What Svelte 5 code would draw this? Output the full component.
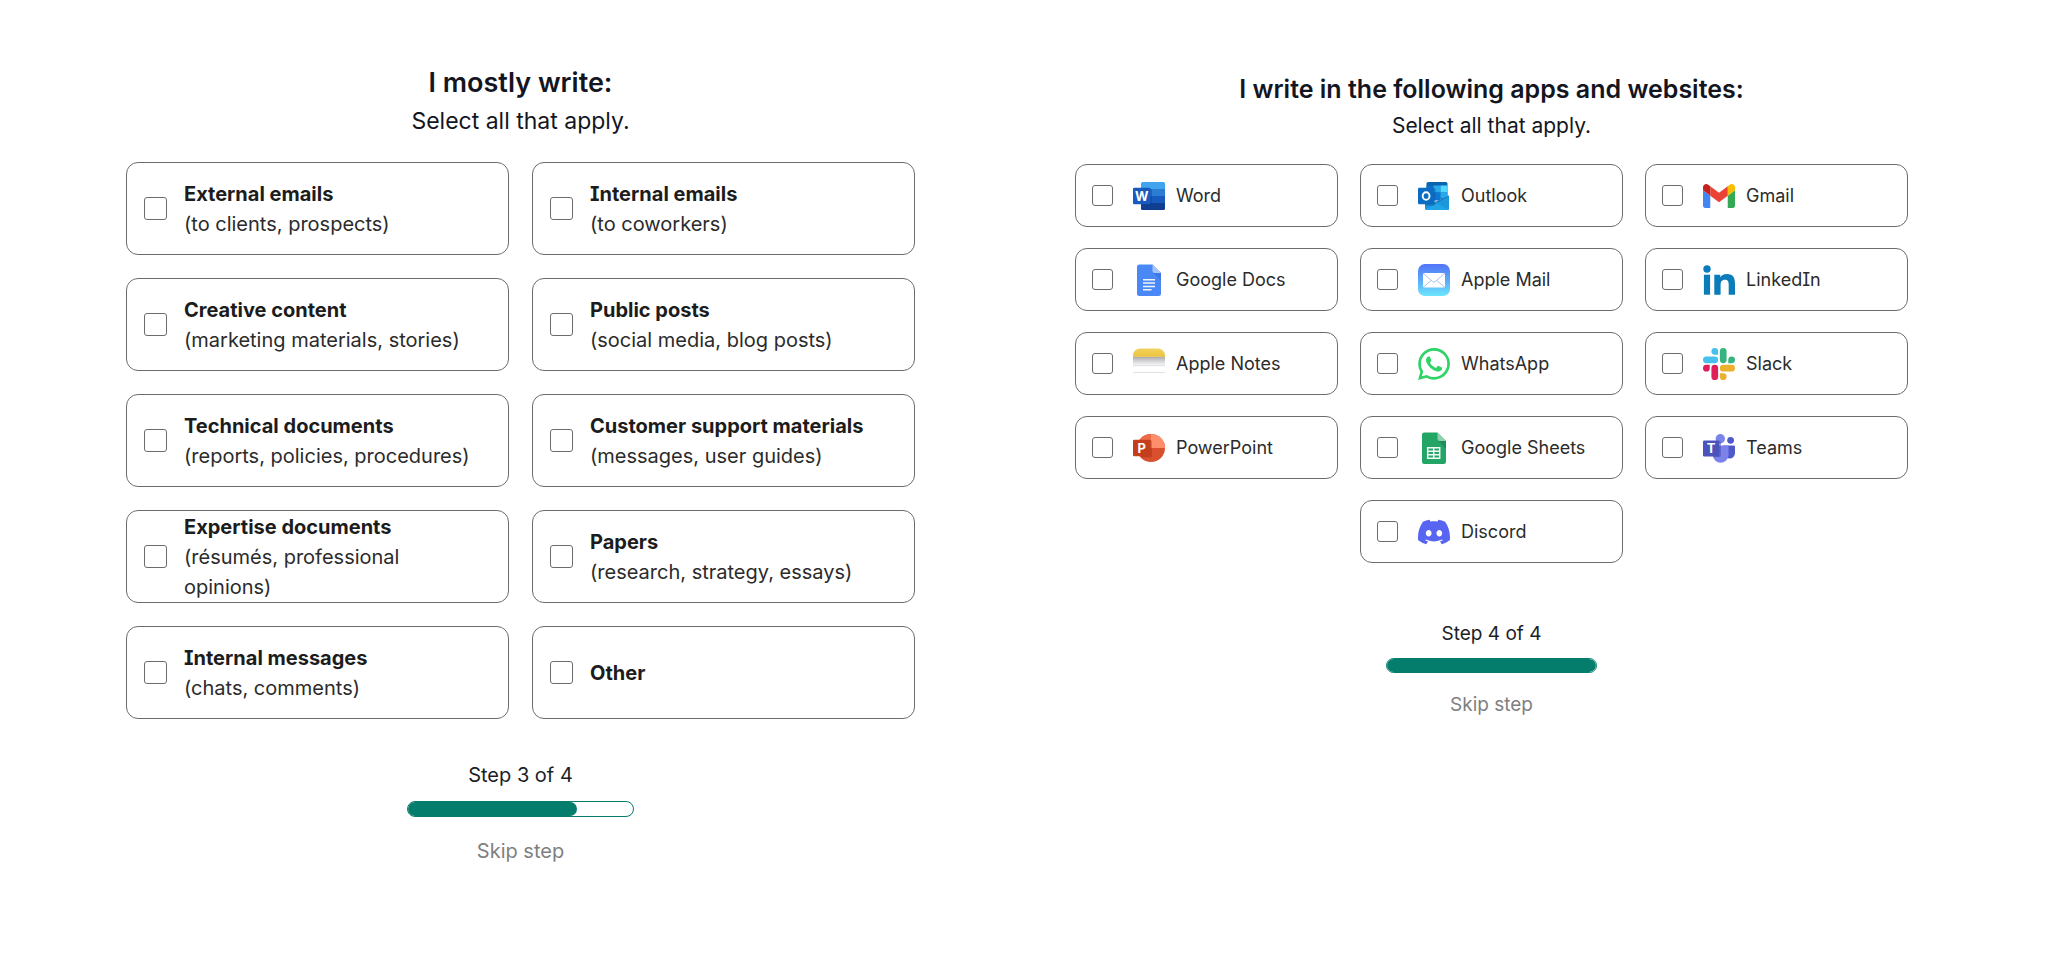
<script lang="ts">
	let topics = [
		{ title: "External emails", note: "(to clients, prospects)", checked: false },
		{ title: "Internal emails", note: "(to coworkers)", checked: false },
		{ title: "Creative content", note: "(marketing materials, stories)", checked: false },
		{ title: "Public posts", note: "(social media, blog posts)", checked: false },
		{ title: "Technical documents", note: "(reports, policies, procedures)", checked: false },
		{ title: "Customer support materials", note: "(messages, user guides)", checked: false },
		{ title: "Expertise documents", note: "(résumés, professional opinions)", checked: false },
		{ title: "Papers", note: "(research, strategy, essays)", checked: false },
		{ title: "Internal messages", note: "(chats, comments)", checked: false },
		{ title: "Other", note: "", checked: false },
	];

	let apps = [
		"Word",
		"Outlook",
		"Gmail",
		"Google Docs",
		"Apple Mail",
		"LinkedIn",
		"Apple Notes",
		"WhatsApp",
		"Slack",
		"PowerPoint",
		"Google Sheets",
		"Teams",
		"Discord",
	].map((name) => ({ name, checked: false }));

	const total = 4;
</script>

<main>
	<section class="topics">
		<header>
			<h1>I mostly write:</h1>
			<p>Select all that apply.</p>
		</header>

		<div class="options">
			{#each topics as topic}
				<label class="card">
					<input type="checkbox" bind:checked={topic.checked} />
					<span class="text">
						<strong>{topic.title}</strong>
						{#if topic.note}
							<span>{topic.note}</span>
						{/if}
					</span>
				</label>
			{/each}
		</div>

		<footer>
			<p>Step 3 of {total}</p>
			<div class="bar"><div class="fill" style="width: {(3 / total) * 100}%"></div></div>
			<button type="button">Skip step</button>
		</footer>
	</section>

	<section class="apps">
		<header>
			<h1>I write in the following apps and websites:</h1>
			<p>Select all that apply.</p>
		</header>

		<div class="options">
			{#each apps as app}
				<label class="card">
					<input type="checkbox" bind:checked={app.checked} />
					<svg viewBox="0 0 32 32" aria-hidden="true">
						{#if app.name === "Word"}
							<clipPath id="word-page"><rect x="8" y="2" width="24" height="28" rx="1.500" /></clipPath>
							<g clip-path="url(#word-page)">
								<rect x="8" y="2" width="24" height="7" fill="#41a5ee" />
								<rect x="8" y="9" width="24" height="7" fill="#2b7cd3" />
								<rect x="8" y="16" width="24" height="7" fill="#185abd" />
								<rect x="8" y="23" width="24" height="7" fill="#103f91" />
								<rect x="8" y="9" width="11" height="16.500" fill="#0b3a85" opacity="0.350" />
							</g>
							<rect y="7.700" width="17.500" height="16.600" rx="1.300" fill="#185abd" />
							<text class="mark" x="8.700" y="20.600">W</text>
						{:else if app.name === "Outlook"}
							<path d="M10 2h18a1.500 1.500 0 0 1 1.500 1.500V19H8.500V3.500A1.500 1.500 0 0 1 10 2z" fill="#0a64ad" />
							<path d="M8.500 5.500h7v7h-7z" fill="#0f6fc0" />
							<path d="M15.500 5.500h7v7h-7z" fill="#28a8ea" />
							<path d="M22.500 5.500h7v7h-7z" fill="#50d9ff" />
							<path d="M15.500 12.500h7v8h-7z" fill="#0f78d4" />
							<path d="M22.500 12.500h7v6h-7z" fill="#28a8ea" />
							<path d="M31 15.500v13a1.500 1.500 0 0 1-1.500 1.500H8.500A1.500 1.500 0 0 1 7 28.500v-12l12 6.500z" fill="#1995df" />
							<path d="M31 15.500v13c0 .5-.2.900-.5 1.100L17 22z" fill="#1078c4" />
							<path d="M7.500 29.600 31 16v12.500a1.500 1.500 0 0 1-1.500 1.500h-21c-.4 0-.8-.2-1-.4z" fill="#28b0ee" opacity="0.550" />
							<path d="M7 8h9a1.500 1.500 0 0 1 1.500 1.500V24a1.500 1.500 0 0 1-1.500 1.500H7z" fill="#0a4a83" opacity="0.400" />
							<rect y="7.700" width="16.300" height="16.600" rx="1.300" fill="#0b6cc4" />
							<ellipse cx="8.100" cy="16" rx="3.400" ry="3.800" fill="none" stroke="#fff" stroke-width="1.900" />
						{:else if app.name === "Gmail"}
							<svg viewBox="52 42 88 66">
								<path fill="#4285f4" d="M58 108h14V74L52 59v43c0 3.320 2.690 6 6 6" />
								<path fill="#34a853" d="M120 108h14c3.320 0 6-2.690 6-6V59l-20 15" />
								<path fill="#fbbc04" d="M120 48v26l20-15v-8c0-7.420-8.470-11.650-14.400-7.200" />
								<path fill="#ea4335" d="M72 74V48l24 18 24-18v26L96 92" />
								<path fill="#c5221f" d="M52 51v8l20 15V48l-5.600-4.200c-5.940-4.450-14.400-.220-14.400 7.200" />
							</svg>
						{:else if app.name === "Google Docs"}
							<path d="M6.200.5H19.500L28 9v20.800a2.200 2.200 0 0 1-2.200 2.200H6.200A2.200 2.200 0 0 1 4 29.800V2.700A2.200 2.200 0 0 1 6.200.5z" fill="#4a89f5" />
							<path d="M20 8.500 28 17V9z" fill="#3467d6" opacity="0.500" />
							<path d="M19.500.5 28 9h-6.300a2.200 2.200 0 0 1-2.200-2.200z" fill="#a5c5fb" />
							<path d="M10 15.800h12M10 19.100h12M10 22.400h12M10 25.700h8.500" stroke="#f1f5fe" stroke-width="1.500" />
						{:else if app.name === "Apple Mail"}
							<linearGradient id="mail-sky" x2="0" y2="1">
								<stop offset="0" stop-color="#5374f8" />
								<stop offset="0.500" stop-color="#5aa9f8" />
								<stop offset="1" stop-color="#6ce6fc" />
							</linearGradient>
							<rect width="32" height="32" rx="7" fill="url(#mail-sky)" />
							<rect x="5" y="9" width="22" height="14.500" rx="1.600" fill="#fff" />
							<path d="M5.500 9.500l9.300 8.200q1.200 1 2.400 0l9.300-8.200M5.500 23l7.800-6.600M26.500 23l-7.800-6.600" fill="none" stroke="#8fb4e8" stroke-width="0.800" />
						{:else if app.name === "LinkedIn"}
							<g fill="#0b7cba">
								<circle cx="4" cy="5" r="3.700" />
								<rect x="0.900" y="10.700" width="6.200" height="20" />
								<path d="M11.300 10.700h6v2.700c1-1.800 3.300-3.300 6.500-3.300 6.700 0 8.200 4 8.200 9.800v10.800h-6.300v-9.600c0-2.600-.2-5.300-3.700-5.300s-4.400 2.500-4.400 5.200v9.700h-6.300z" />
							</g>
						{:else if app.name === "Apple Notes"}
							<linearGradient id="notes-top" x2="0" y2="1">
								<stop offset="0" stop-color="#f2d35e" />
								<stop offset="1" stop-color="#edc23c" />
							</linearGradient>
							<linearGradient id="notes-shade" x2="0" y2="1">
								<stop offset="0" stop-color="#a9a9ab" />
								<stop offset="0.600" stop-color="#dcdcde" />
								<stop offset="1" stop-color="#f7f7f8" />
							</linearGradient>
							<rect y="8.500" width="32" height="9" fill="url(#notes-shade)" />
							<path d="M7 .5h18a7 7 0 0 1 7 7v1.300H0V7.500a7 7 0 0 1 7-7z" fill="url(#notes-top)" />
							<path d="M0 17.700h32M0 24.500h32" stroke="#d4d4d6" stroke-width="0.700" />
						{:else if app.name === "WhatsApp"}
							<svg viewBox="0 0 24 24">
								<path
									fill="#2fd366"
									d="M17.472 14.382c-.297-.149-1.758-.867-2.030-.967-.273-.099-.471-.148-.670.150-.197.297-.767.966-.940 1.164-.173.199-.347.223-.644.075-.297-.150-1.255-.463-2.390-1.475-.883-.788-1.480-1.761-1.653-2.059-.173-.297-.018-.458.130-.606.134-.133.298-.347.446-.520.149-.174.198-.298.298-.497.099-.198.050-.371-.025-.520-.075-.149-.669-1.612-.916-2.207-.242-.579-.487-.500-.669-.510-.173-.008-.371-.010-.570-.010-.198 0-.520.074-.792.372-.272.297-1.040 1.016-1.040 2.479 0 1.462 1.065 2.875 1.213 3.074.149.198 2.096 3.200 5.077 4.487.709.306 1.262.489 1.694.625.712.227 1.360.195 1.871.118.571-.085 1.758-.719 2.006-1.413.248-.694.248-1.289.173-1.413-.074-.124-.272-.198-.570-.347m-5.421 7.403h-.004a9.870 9.870 0 0 1-5.031-1.378l-.361-.214-3.741.982.998-3.648-.235-.374a9.860 9.860 0 0 1-1.510-5.260c.001-5.450 4.436-9.884 9.888-9.884 2.640 0 5.122 1.030 6.988 2.898a9.825 9.825 0 0 1 2.893 6.994c-.003 5.450-4.437 9.884-9.885 9.884m8.413-18.297A11.815 11.815 0 0 0 12.050 0C5.495 0 .160 5.335.157 11.892c0 2.096.547 4.142 1.588 5.945L.057 24l6.305-1.654a11.882 11.882 0 0 0 5.683 1.448h.005c6.554 0 11.890-5.335 11.893-11.893a11.821 11.821 0 0 0-3.480-8.413Z"
								/>
							</svg>
						{:else if app.name === "Slack"}
							<svg viewBox="0 0 24 24">
								<path fill="#e01e5a" d="M5.042 15.165a2.528 2.528 0 0 1-2.520 2.523A2.528 2.528 0 0 1 0 15.165a2.527 2.527 0 0 1 2.522-2.520h2.520v2.520zM6.313 15.165a2.527 2.527 0 0 1 2.521-2.520 2.527 2.527 0 0 1 2.521 2.520v6.313A2.528 2.528 0 0 1 8.834 24a2.528 2.528 0 0 1-2.521-2.522v-6.313z" />
								<path fill="#46c1ee" d="M8.834 5.042a2.528 2.528 0 0 1-2.521-2.520A2.528 2.528 0 0 1 8.834 0a2.528 2.528 0 0 1 2.521 2.522v2.520H8.834zM8.834 6.313a2.528 2.528 0 0 1 2.521 2.521 2.528 2.528 0 0 1-2.521 2.521H2.522A2.528 2.528 0 0 1 0 8.834a2.528 2.528 0 0 1 2.522-2.521h6.312z" />
								<path fill="#36b37e" d="M18.956 8.834a2.528 2.528 0 0 1 2.522-2.521A2.528 2.528 0 0 1 24 8.834a2.528 2.528 0 0 1-2.522 2.521h-2.522V8.834zM17.688 8.834a2.528 2.528 0 0 1-2.523 2.521 2.527 2.527 0 0 1-2.520-2.521V2.522A2.527 2.527 0 0 1 15.165 0a2.528 2.528 0 0 1 2.523 2.522v6.312z" />
								<path fill="#ecb02f" d="M15.165 18.956a2.528 2.528 0 0 1 2.523 2.522A2.528 2.528 0 0 1 15.165 24a2.527 2.527 0 0 1-2.520-2.522v-2.522h2.520zM15.165 17.688a2.527 2.527 0 0 1-2.520-2.523 2.526 2.526 0 0 1 2.520-2.520h6.313A2.527 2.527 0 0 1 24 15.165a2.528 2.528 0 0 1-2.522 2.523h-6.313z" />
							</svg>
						{:else if app.name === "PowerPoint"}
							<circle cx="18" cy="16" r="14" fill="#d9502f" />
							<path d="M18 2a14 14 0 0 1 14 14H18z" fill="#ff8f6b" />
							<path d="M18 2v14H4A14 14 0 0 1 18 2z" fill="#ed6c47" />
							<path d="M8 8h9.500A1.500 1.500 0 0 1 19 9.500V24a1.500 1.500 0 0 1-1.500 1.500H8z" fill="#8f2a14" opacity="0.350" />
							<rect y="7.700" width="17.500" height="16.600" rx="1.300" fill="#c43e1c" />
							<text class="mark" x="8.700" y="20.600">P</text>
						{:else if app.name === "Google Sheets"}
							<path d="M6.200.5H19.500L28 9v20.800a2.200 2.200 0 0 1-2.200 2.200H6.200A2.200 2.200 0 0 1 4 29.800V2.700A2.200 2.200 0 0 1 6.200.5z" fill="#23a566" />
							<path d="M20 8.500 28 17V9z" fill="#1c8755" opacity="0.800" />
							<path d="M19.500.5 28 9h-6.300a2.200 2.200 0 0 1-2.200-2.200z" fill="#8ed1b1" />
							<path d="M9.700 15.700h12v10.600h-12zM9.700 19.200h12M9.700 22.700h12M15.700 15.700v10.600" fill="none" stroke="#f1faf5" stroke-width="1.500" />
						{:else if app.name === "Teams"}
							<circle cx="27.600" cy="8.300" r="3.400" fill="#5059c9" />
							<path d="M20 13.500h10.700A1.300 1.300 0 0 1 32 14.800V21a5.500 5.500 0 0 1-11 0z" fill="#5059c9" />
							<circle cx="17.300" cy="6.700" r="4.700" fill="#7b83eb" />
							<path d="M10 13.500h14.200a1.300 1.300 0 0 1 1.300 1.300v9a7.900 7.900 0 0 1-15.700 0z" fill="#7b83eb" />
							<path d="M10 9h6.500A1.500 1.500 0 0 1 18 10.500v13a1.500 1.500 0 0 1-1.500 1.500H10z" fill="#3d44a5" opacity="0.450" />
							<rect y="8.500" width="16.300" height="16" rx="1.300" fill="#4b53bc" />
							<text class="mark" x="8.100" y="21">T</text>
						{:else if app.name === "Discord"}
							<svg viewBox="0 0 24 24">
								<path
									fill="#5865f2"
									d="M20.317 4.370a19.791 19.791 0 0 0-4.885-1.515.074.074 0 0 0-.079.037c-.211.375-.445.865-.608 1.250-1.845-.276-3.680-.276-5.487 0-.164-.393-.406-.874-.618-1.250a.077.077 0 0 0-.079-.037 19.736 19.736 0 0 0-4.885 1.515.070.070 0 0 0-.032.028C.533 9.046-.319 13.580.099 18.058a.082.082 0 0 0 .031.056c2.053 1.508 4.041 2.423 5.993 3.029a.078.078 0 0 0 .084-.028c.462-.630.873-1.295 1.226-1.994a.076.076 0 0 0-.042-.106c-.653-.248-1.274-.550-1.872-.892a.077.077 0 0 1-.008-.128c.126-.094.252-.192.372-.291a.074.074 0 0 1 .078-.011c3.928 1.793 8.180 1.793 12.061 0a.074.074 0 0 1 .079.010c.120.099.246.198.373.292a.077.077 0 0 1-.007.128 12.299 12.299 0 0 1-1.873.891.077.077 0 0 0-.041.107c.360.698.772 1.363 1.225 1.993a.076.076 0 0 0 .084.029c1.961-.607 3.950-1.522 6.002-3.029a.077.077 0 0 0 .031-.055c.500-5.177-.838-9.674-3.549-13.660a.061.061 0 0 0-.031-.029zM8.020 15.331c-1.183 0-2.157-1.086-2.157-2.419 0-1.333.956-2.419 2.157-2.419 1.211 0 2.176 1.095 2.157 2.419 0 1.333-.956 2.419-2.157 2.419zm7.975 0c-1.183 0-2.157-1.086-2.157-2.419 0-1.333.955-2.419 2.157-2.419 1.211 0 2.176 1.095 2.157 2.419 0 1.333-.946 2.419-2.157 2.419Z"
								/>
							</svg>
						{/if}
					</svg>
					<span>{app.name}</span>
				</label>
			{/each}
		</div>

		<footer>
			<p>Step 4 of {total}</p>
			<div class="bar"><div class="fill" style="width: {(4 / total) * 100}%"></div></div>
			<button type="button">Skip step</button>
		</footer>
	</section>
</main>

<style>
	:global(body) {
		margin: 0;
		background: #fff;
	}

	* {
		box-sizing: border-box;
	}

	main {
		display: grid;
		grid-template-columns: 789fr 833fr;
		column-gap: 160px;
		align-items: start;

		padding: 65px 140px 80px 126px;

		font-family: "Inter", sans-serif;
		color: #2b2b2b;
	}

	header {
		text-align: center;
		color: #14161f;
	}

	h1,
	p {
		margin: 0;
	}

	h1 {
		line-height: 36px;
		font-weight: 600;
	}

	header p {
		line-height: 30px;
	}

	.options {
		display: grid;
	}

	.card {
		display: flex;
		align-items: center;

		border: 1px solid #6c6c6c;
		border-radius: 12px;

		cursor: pointer;

		font-feature-settings: "cv08";
	}

	.card input {
		appearance: none;
		flex: none;
		margin: 0;

		border: 1px solid #6c6c6c;
		border-radius: 3px;

		background: #fff;
		cursor: pointer;
	}

	.card input:checked {
		background: #057d6d;
	}

	footer {
		display: flex;
		flex-direction: column;
		align-items: center;

		color: #1c1e27;
	}

	footer p,
	footer button {
		line-height: 30px;
	}

	button {
		padding: 0;

		border: none;
		background: none;

		font-family: inherit;
		color: #7f7f7f;

		cursor: pointer;
	}

	.bar {
		overflow: hidden;

		border: 1px solid #057d6d;
		border-radius: 8px;
	}

	.fill {
		height: 100%;
		border-radius: 0 8px 8px 0;
		background: #057d6d;
	}

	/* left step */
	.topics h1 {
		font-size: 27px;
	}

	.topics header p {
		margin-top: 5px;
		font-size: 23px;
	}

	.topics .options {
		grid-template-columns: 1fr 1fr;
		gap: 23px;
		margin-top: 26px;
	}

	.topics .card {
		gap: 17px;
		min-height: 93px;
		padding: 0 36px 0 17px;

		font-size: 20px;
		line-height: 30px;
	}

	.topics .card input {
		width: 23px;
		height: 23px;
	}

	.text {
		display: flex;
		flex-direction: column;
	}

	.text strong {
		font-weight: 700;
		color: #1c1c1c;
	}

	.topics footer {
		margin-top: 41px;
	}

	.topics footer p,
	.topics footer button {
		font-size: 20px;
	}

	.topics .bar {
		width: 227px;
		height: 16px;
		margin: 11px 0 19px;
	}

	/* right step */
	.apps {
		padding-top: 6px;
	}

	.apps h1 {
		font-size: 25px;
	}

	.apps header p {
		margin-top: 4px;
		font-size: 21px;
	}

	.apps .options {
		grid-template-columns: 1fr 1fr 1fr;
		gap: 21px 22px;
		margin-top: 23px;
	}

	.apps .card {
		min-height: 63px;
		padding: 0 16px;

		font-size: 18px;
		line-height: 28px;
	}

	.apps .card:last-child {
		grid-column: 2;
	}

	.apps .card input {
		width: 21px;
		height: 21px;
	}

	.card > svg {
		flex: none;
		width: 32px;
		height: 32px;
		margin: 0 11px 0 20px;
	}

	.mark {
		font-size: 13px;
		font-weight: 700;
		text-anchor: middle;
		fill: #fff;
	}

	.apps footer {
		margin-top: 56px;
	}

	.apps footer p,
	.apps footer button {
		font-size: 19px;
	}

	.apps .bar {
		width: 211px;
		height: 15px;
		margin: 9px 0 17px;
	}
</style>
